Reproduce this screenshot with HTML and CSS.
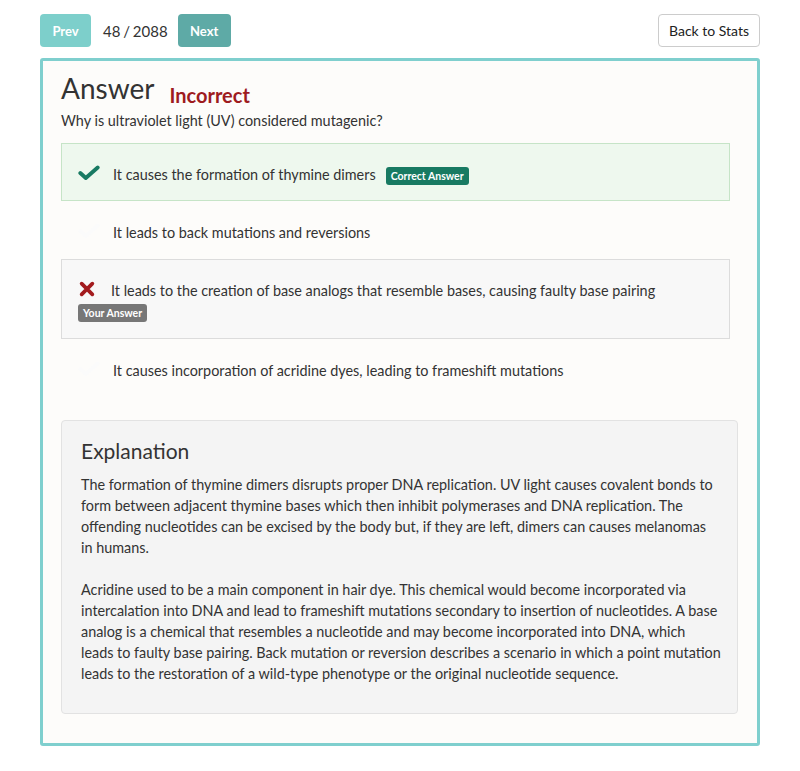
FILE: index.html
```html
<!DOCTYPE html>
<html>
<head>
<meta charset="utf-8">
<link rel="stylesheet" href="styles.css">
</head>
<body>
<div class="page">
  <div class="topbar">
    <div class="nav">
      <button class="btn btn-prev">Prev</button>
      <span class="count">48 / 2088</span>
      <button class="btn btn-next">Next</button>
    </div>
    <button class="btn-back">Back to Stats</button>
  </div>
  <div class="card">
    <div class="title-row">
      <h1 class="title">Answer</h1>
      <span class="status">Incorrect</span>
    </div>
    <p class="question">Why is ultraviolet light (UV) considered mutagenic?</p>
    <div class="options">
      <div class="option correct">
        <svg class="icon" viewBox="0 0 24 17" width="22" height="16"><path d="M2.5 8.5 L8.5 14 L21.5 2.5" fill="none" stroke="#187a62" stroke-width="4.2" stroke-linecap="round" stroke-linejoin="round"/></svg><span class="text">It causes the formation of thymine dimers</span><span class="badge badge-green">Correct Answer</span>
      </div>
      <div class="option">
        <svg class="icon" viewBox="0 0 24 17" width="22" height="16"><path d="M2.5 8.5 L8.5 14 L21.5 2.5" fill="none" stroke="#fbfbfb" stroke-width="4.2" stroke-linecap="round" stroke-linejoin="round"/></svg><span class="text">It leads to back mutations and reversions</span>
      </div>
      <div class="option wrong">
        <svg class="icon icon-x" viewBox="0 0 18 18" width="16" height="16"><path d="M3 3 L15 15 M15 3 L3 15" fill="none" stroke="#a31b1e" stroke-width="4.2" stroke-linecap="round"/></svg><span class="text">It leads to the creation of base analogs that resemble bases, causing faulty base pairing</span> <span class="badge badge-gray">Your Answer</span>
      </div>
      <div class="option">
        <svg class="icon" viewBox="0 0 24 17" width="22" height="16"><path d="M2.5 8.5 L8.5 14 L21.5 2.5" fill="none" stroke="#fbfbfb" stroke-width="4.2" stroke-linecap="round" stroke-linejoin="round"/></svg><span class="text">It causes incorporation of acridine dyes, leading to frameshift mutations</span>
      </div>
    </div>
    <div class="explanation">
      <h2 class="exp-title">Explanation</h2>
      <p>The formation of thymine dimers disrupts proper DNA replication. UV light causes covalent bonds to form between adjacent thymine bases which then inhibit polymerases and DNA replication. The offending nucleotides can be excised by the body but, if they are left, dimers can causes melanomas in&nbsp;humans.</p>
      <p>Acridine used to be a main component in hair dye. This chemical would become incorporated via intercalation into DNA and lead to frameshift mutations secondary to insertion of nucleotides. A base analog is a chemical that resembles a nucleotide and may become incorporated into DNA, which leads&nbsp;to faulty base pairing. Back mutation or reversion describes a scenario in which a point mutation leads to the restoration of a wild-type phenotype or the original nucleotide sequence.</p>
    </div>
  </div>
</div>
</body>
</html>
```

FILE: styles.css
```css
* { box-sizing: border-box; }
html, body { margin: 0; padding: 0; background: #ffffff; }
body {
  font-family: Lato, "Open Sans", sans-serif;
  color: #333333;
  font-size: 14.4px;
}
.page {
  padding: 14px 40px 0 40px;
  width: 800px;
}
.topbar {
  display: flex;
  justify-content: space-between;
  align-items: center;
  height: 33px;
}
.nav {
  display: flex;
  align-items: center;
}
.btn {
  height: 33px;
  border: none;
  border-radius: 4px;
  color: #ffffff;
  font-family: Lato, sans-serif;
  font-weight: bold;
  font-size: 13px;
  padding: 0;
}
.btn-prev { background: #7dcfcb; width: 51px; }
.btn-next { background: #5eaaa6; width: 53px; }
.count {
  font-size: 15px;
  color: #333;
  margin: 0 10px 0 12px;
  word-spacing: -1px;
}
.btn-back {
  height: 33px;
  width: 102px;
  background: #ffffff;
  border: 1px solid #cccccc;
  border-radius: 4px;
  font-family: Lato, sans-serif;
  font-size: 14px;
  color: #222;
  padding: 0;
}
.card {
  margin-top: 11px;
  border: 3px solid #7fcfce;
  border-radius: 3px;
  background: #fdfcfa;
  padding: 10px 18px 30px 18px;
  height: 688px;
}
.title-row {
  display: flex;
  align-items: baseline;
}
.title {
  margin: 0;
  font-size: 28px;
  font-weight: normal;
  color: #333;
  line-height: 34px;
}
.status {
  color: #9e1b1e;
  font-weight: bold;
  font-size: 20px;
  margin-left: 15px;
  position: relative;
  top: 4px;
}
.question {
  margin: 6px 0 12px 0;
  font-size: 14.4px;
  line-height: 20px;
}
.options {
  width: 669px;
}
.option {
  border: 1px solid transparent;
  padding: 21px 16px 15px 16px;
  line-height: 20px;
  font-size: 14.4px;
}
.option .icon {
  display: inline-block;
  vertical-align: -1px;
  margin-right: 13px;
}
.option .icon-x {
  margin-left: 1px;
  margin-right: 16px;
}
.correct {
  background: #eef8ee;
  border-color: #c6e4c7;
}
.wrong {
  background: #f8f8f8;
  border-color: #dcdcdc;
  padding-bottom: 16px;
}
.badge {
  display: inline-block;
  font-size: 10.5px;
  font-weight: bold;
  color: #fff;
  border-radius: 3px;
  padding: 0 5px;
  line-height: 18px;
  vertical-align: 0;
}
.badge-green {
  background: #187a62;
  margin-left: 10px;
}
.badge-gray {
  background: #777777;
  margin-top: 3px;
}
.explanation {
  margin-top: 23px;
  background: #f4f4f4;
  border: 1px solid #e2e2e2;
  border-radius: 4px;
  padding: 16px 7px 29px 19px;
  width: 677px;
}
.exp-title {
  margin: 0 0 9px 0;
  font-size: 21px;
  font-weight: normal;
  line-height: 28px;
  color: #333;
}
.explanation p {
  margin: 0 0 21px 0;
  line-height: 21px;
  font-size: 14.4px;
}
.explanation p:last-child {
  margin-bottom: 0;
}
```
